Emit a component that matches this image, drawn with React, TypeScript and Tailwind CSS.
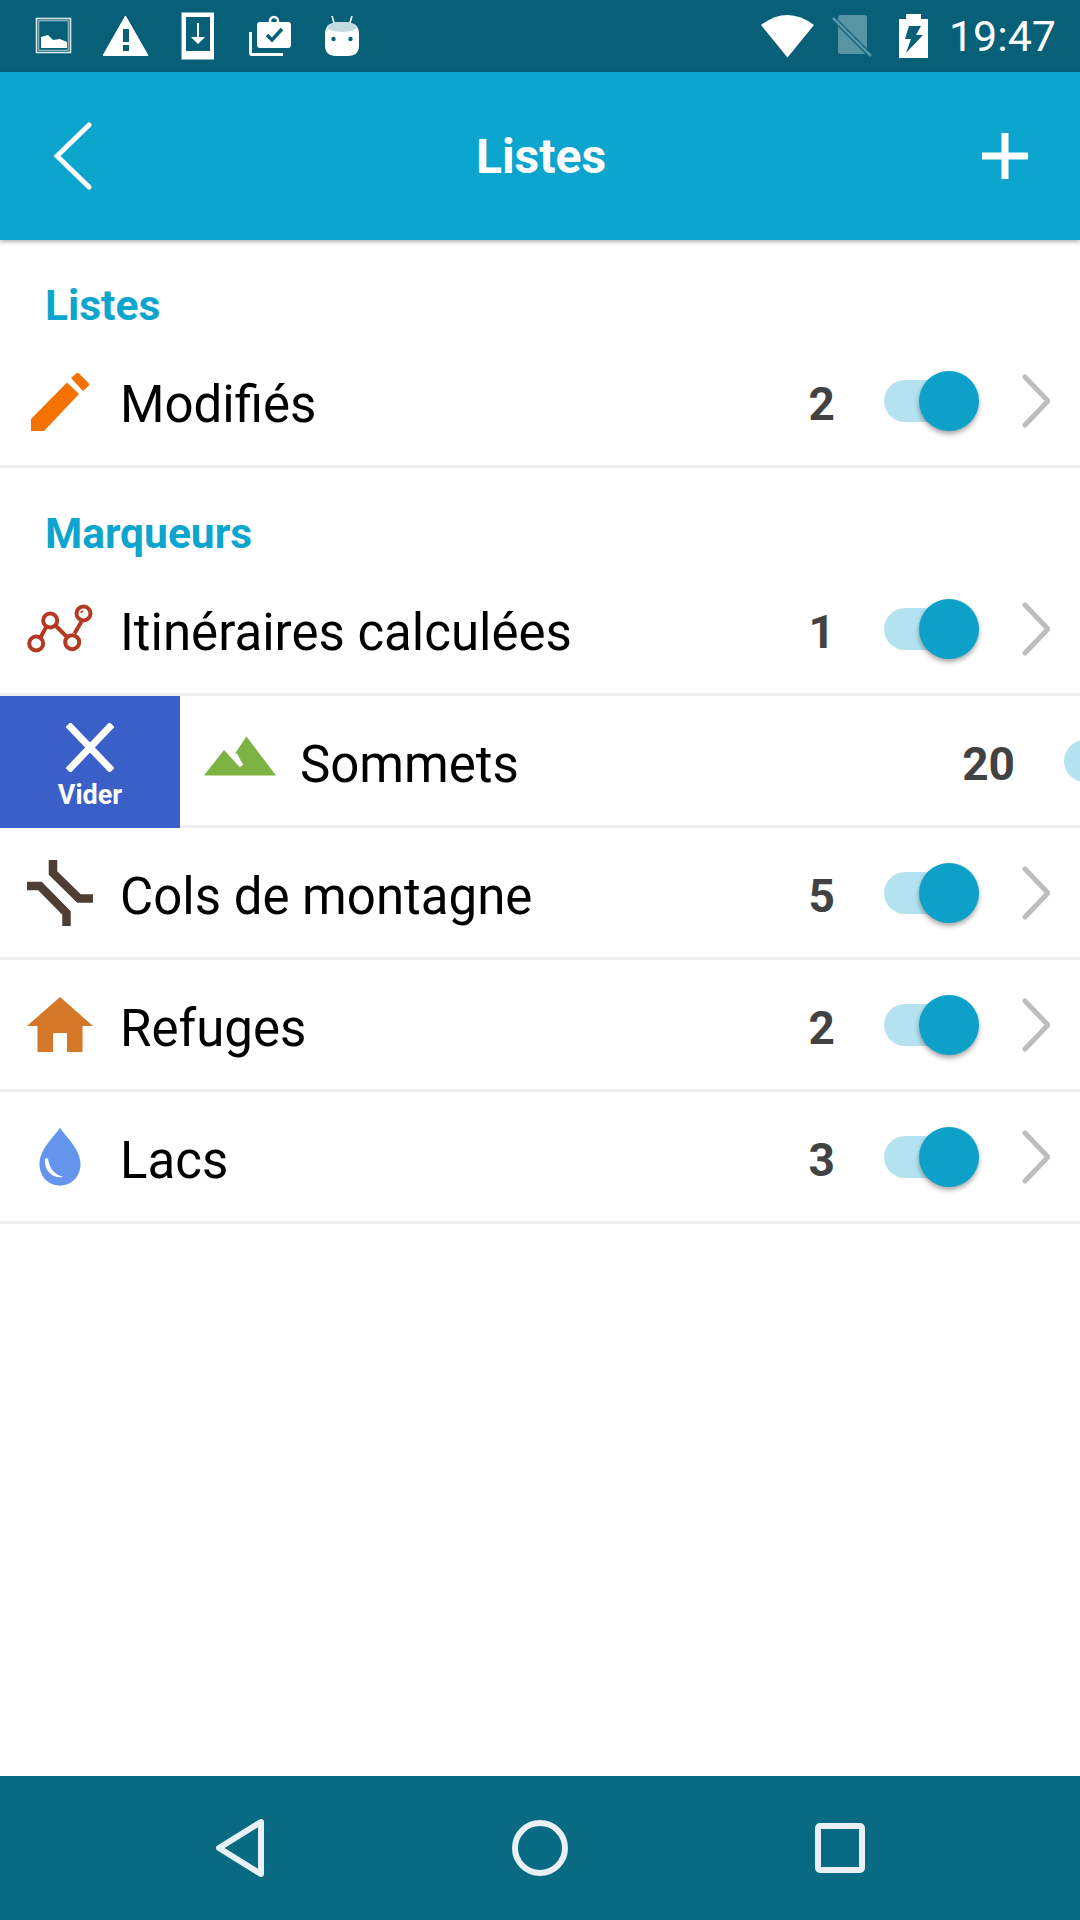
import React from 'react';

const font = { fontFamily: 'Roboto, "Noto Sans", sans-serif' };

const PencilIcon = () => (
  <svg width="60" height="60" viewBox="0 0 60 60">
    <path d="M1 48 L37 11.500 L49 23 L14 60 L1 60 Z" fill="#f57200" />
    <path d="M41 7 L46 2.500 Q47.500 1 49 2.500 L58.500 12 Q60 13.500 58.500 15 L53 20 Z" fill="#f57200" />
  </svg>
);

const RouteIcon = () => (
  <svg width="72" height="56" viewBox="24.500 600.500 72 56" fill="none" stroke="#b33a22" strokeWidth="4">
    <path d="M41 637 L47 626 M56 625 L67 636 M75 633 L82 621" />
    <circle cx="36.700" cy="643" r="7" />
    <circle cx="50.700" cy="620" r="7" />
    <circle cx="72.700" cy="641.700" r="7" />
    <circle cx="84" cy="613" r="7" />
    <path d="M81 612 L83.500 610.500" strokeWidth="1.500" />
  </svg>
);

const MountainIcon = () => (
  <svg width="72" height="40" viewBox="0 0 72 40" className="mb-[9px]">
    <path d="M0 39.500 L20 14 L31 26 L36.500 32 L31 17.500 L42.500 0.500 L72 39.500 Z" fill="#7cb342" />
    <path d="M31 18 L37.500 30" stroke="#ffffff" strokeWidth="4" fill="none" />
  </svg>
);

const ColIcon = () => (
  <svg width="66" height="66" viewBox="0 0 66 66" fill="none" stroke="#4e3e33" strokeWidth="8.500">
    <path d="M26 0 L26 13 L52 38.500 L66 38.500" />
    <path d="M0 26 L13 26 L39.500 53 L39.500 66" />
  </svg>
);

const HouseIcon = () => (
  <svg width="66" height="55" viewBox="0 0 66 55">
    <path d="M33 0 L66 29 L55.500 29 L55.500 55 L40 55 L40 36 L26 36 L26 55 L10.500 55 L10.500 29 L0 29 Z" fill="#d47726" />
  </svg>
);

const DropIcon = () => (
  <svg width="42" height="59" viewBox="0 0 42 59">
    <path d="M21 0.500 C26 9 41.500 22 41.500 37 C41.500 50 32 58.500 21 58.500 C10 58.500 0.500 50 0.500 37 C0.500 22 16 9 21 0.500 Z" fill="#6495ed" />
    <path d="M6 31.500 C4.500 43 13 52 24.500 50 C16 48 10.500 42 9 31.500 Z" fill="#ffffff" />
  </svg>
);

const Chevron = () => (
  <svg width="28" height="54" viewBox="0 0 28 54" fill="none" className="shrink-0">
    <path d="M3 3 L26 27 L3 51" stroke="#bdbdbd" strokeWidth="5" strokeLinecap="round" />
  </svg>
);

const Toggle = () => (
  <div className="relative h-[42px] w-[76px] shrink-0 rounded-full bg-[#b5e2f0]">
    <div className="absolute left-[35px] top-[-9px] h-[60px] w-[60px] rounded-full bg-[#0da0c9] shadow-[0_3px_5px_rgba(0,0,0,0.35)]" />
  </div>
);

const Row = ({ icon, label, count }: { icon: React.ReactNode; label: string; count: number }) => (
  <div className="flex h-[129px] w-[1080px] shrink-0 items-center pr-[30px]">
    <div className="flex w-[120px] shrink-0 items-center justify-center">{icon}</div>
    <span className="flex-1 pt-[8px] text-[51px] leading-none text-black">{label}</span>
    <span className="w-[70px] shrink-0 pt-[6px] text-right text-[46px] font-bold leading-none text-[#424242]">{count}</span>
    <div className="ml-[49px]">
      <Toggle />
    </div>
    <div className="ml-[62px]">
      <Chevron />
    </div>
  </div>
);

const Section = ({ title }: { title: string }) => (
  <div className="flex h-[96px] items-center pl-[45px] pt-[36px] text-[42.500px] font-bold leading-none text-[#0ba5cd]">{title}</div>
);

const ListRow = (props: { icon: React.ReactNode; label: string; count: number }) => (
  <div className="border-b-[3px] border-[#eeeeee]">
    <Row {...props} />
  </div>
);

const StatusLeft = () => (
  <div className="flex items-center">
    <svg width="38" height="38" viewBox="35 17 38 38" className="ml-[35px]">
      <rect x="36.500" y="18.500" width="34" height="34" fill="none" stroke="#dfe9ec" strokeWidth="1.600" />
      <rect x="38.800" y="20.800" width="29.400" height="29.400" fill="none" stroke="#dfe9ec" strokeWidth="0.800" />
      <path d="M41 37 L48 35 L53 40 L60 39 L67 42 L67 48 L41 48 Z" fill="#ffffff" />
    </svg>
    <svg width="46" height="42" viewBox="103 14 46 42" className="ml-[30px]">
      <path d="M125.500 15 L148 54.500 L103 54.500 Z" fill="#ffffff" stroke="#ffffff" strokeWidth="1" strokeLinejoin="round" />
      <rect x="123" y="28" width="6" height="13" fill="#076078" />
      <rect x="123" y="44" width="6" height="6" fill="#076078" />
    </svg>
    <svg width="34" height="48" viewBox="181 12 34 48" className="ml-[32px]">
      <path d="M181.500 12.500 H214 V59.500 H181.500 Z M186 17 V51 H210 V17 Z" fill="#ffffff" fillRule="evenodd" />
      <path d="M197 23 H199 V37 H205 L198 44 L191 37 H197 Z" fill="#ffffff" />
    </svg>
    <svg width="44" height="42" viewBox="248 16 44 42" className="ml-[33px]">
      <path d="M249 33 H252 V54 H283 V57 H252 Q249 57 249 54 Z" fill="#ffffff" />
      <rect x="257" y="23" width="34" height="26" rx="3" fill="#ffffff" />
      <circle cx="274" cy="22" r="4" fill="none" stroke="#ffffff" strokeWidth="2.500" />
      <path d="M267 36 L272 41 L282 30" fill="none" stroke="#076078" strokeWidth="3.500" />
    </svg>
    <svg width="36" height="42" viewBox="324 12 36 42" className="ml-[32px]">
      <path d="M332 13 L335 23 M352 13 L349 23" stroke="#ffffff" strokeWidth="1.600" />
      <path d="M325 30 Q325 19 342 19 Q359 19 359 30 L359 42 Q359 53 348 53 L336 53 Q325 53 325 42 Z" fill="#ffffff" />
      <ellipse cx="342" cy="24" rx="15" ry="5" fill="#c2dbe0" />
      <circle cx="333.500" cy="36" r="2.200" fill="#076078" />
      <circle cx="350.500" cy="36" r="2.200" fill="#076078" />
    </svg>
  </div>
);

const StatusRight = () => (
  <div className="flex items-center pr-[24px]">
    <svg width="54" height="44" viewBox="761 13 54 44">
      <path d="M787.500 56.500 L761 24 Q787.500 4 814 24 Z" fill="#ffffff" />
    </svg>
    <svg width="40" height="44" viewBox="832 15 40 44" className="ml-[17px]">
      <path d="M841 16 H864 Q867 16 867 19 V52 Q867 55 864 55 H841 Q838 55 838 52 V19 Q838 16 841 16 Z" fill="#ffffff" fillOpacity="0.33" />
      <path d="M834 20 L871 57" stroke="#076078" strokeWidth="5" />
      <path d="M833 19 L871 57" stroke="#ffffff" strokeOpacity="0.33" strokeWidth="2.500" />
    </svg>
    <svg width="30" height="45" viewBox="899 14 30 45" className="ml-[27px]">
      <path d="M906 14 H921 V19 H928 V58 H899 V19 H906 Z" fill="#ffffff" />
      <path d="M909 26 H921 L916 35 H923 L906 53 L911 39 H905 Z" fill="#076078" />
    </svg>
    <span className="ml-[20px] text-[43px] leading-none text-white">19:47</span>
  </div>
);

export default function App() {
  return (
    <div className="flex h-[1920px] w-[1080px] flex-col overflow-hidden bg-white" style={font}>
      <div className="flex h-[72px] shrink-0 items-center justify-between bg-[#076078]">
        <StatusLeft />
        <StatusRight />
      </div>

      <header className="relative z-10 flex h-[168px] shrink-0 items-center bg-[#0ba5cd] pl-[54px] pr-[52px] shadow-[0_2px_4px_rgba(0,0,0,0.3)]">
        <div className="flex flex-1 items-center">
          <svg width="38" height="68" viewBox="0 0 38 68" fill="none">
            <path d="M35 3 L3 34 L35 65" stroke="#ffffff" strokeWidth="5" strokeLinecap="round" />
          </svg>
        </div>
        <h1 className="pt-[2px] text-[48px] font-bold leading-none text-white">Listes</h1>
        <div className="flex flex-1 items-center justify-end">
          <svg width="46" height="46" viewBox="0 0 46 46">
            <path d="M23 0 V46 M0 23 H46" stroke="#ffffff" strokeWidth="7" />
          </svg>
        </div>
      </header>

      <main className="flex-1">
        <Section title="Listes" />
        <ListRow icon={<PencilIcon />} label="Modifiés" count={2} />
        <Section title="Marqueurs" />
        <ListRow icon={<RouteIcon />} label="Itinéraires calculées" count={1} />

        {/* Swiped row: the clear action pushes the row content off the right edge */}
        <div className="flex h-[132px] overflow-hidden">
          <div className="flex h-[132px] w-[180px] shrink-0 flex-col items-center bg-[#3a5fc8] pt-[27px]">
            <svg width="48" height="49" viewBox="0 0 48 49">
              <path d="M2 1.500 L46 47.500 M46 1.500 L2 47.500" stroke="#ffffff" strokeWidth="7" />
            </svg>
            <span className="mt-[10px] text-[27px] font-bold leading-none text-white">Vider</span>
          </div>
          <div className="h-[132px] shrink-0 border-b-[3px] border-[#eeeeee]">
            <Row icon={<MountainIcon />} label="Sommets" count={20} />
          </div>
        </div>

        <ListRow icon={<ColIcon />} label="Cols de montagne" count={5} />
        <ListRow icon={<HouseIcon />} label="Refuges" count={2} />
        <ListRow icon={<DropIcon />} label="Lacs" count={3} />
      </main>

      <nav className="flex h-[144px] shrink-0 items-center justify-center bg-[#086a83]">
        <svg width="50" height="58" viewBox="0 0 50 58" fill="none">
          <path d="M46 3 L4 29 L46 55 Z" stroke="#e9f1f4" strokeWidth="6" strokeLinejoin="round" />
        </svg>
        <svg width="58" height="58" viewBox="0 0 58 58" fill="none" className="mx-[246px]">
          <circle cx="29" cy="29" r="25" stroke="#e9f1f4" strokeWidth="6" />
        </svg>
        <svg width="50" height="50" viewBox="0 0 50 50" fill="none">
          <rect x="3" y="3" width="44" height="44" rx="2" stroke="#e9f1f4" strokeWidth="6" />
        </svg>
      </nav>
    </div>
  );
}
